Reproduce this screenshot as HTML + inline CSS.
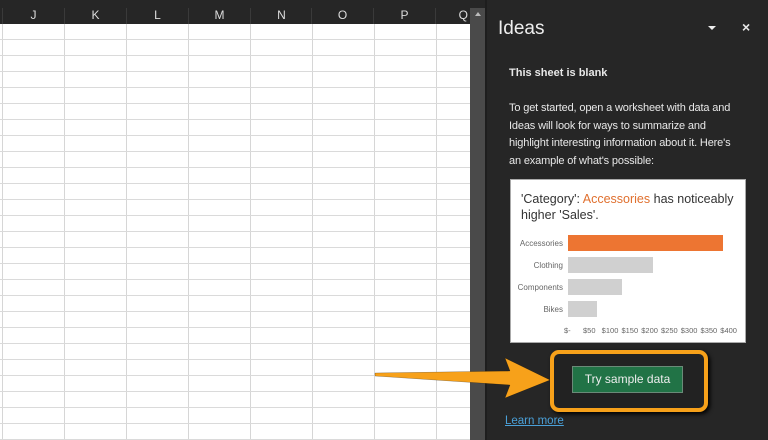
<!DOCTYPE html>
<html><head><style>
*{margin:0;padding:0;box-sizing:border-box}
body{width:768px;height:440px;overflow:hidden;background:#262626;font-family:"Liberation Sans",sans-serif;position:relative}
.grid{position:absolute;left:0;top:24px;width:470px;height:416px;background-color:#fff;
background-image:linear-gradient(#dadada 1px,transparent 1px),linear-gradient(90deg,#d6d6d6 1px,transparent 1px);
background-size:100% 16px,62px 100%;background-position:0 15px,2px 0}
.hdr{position:absolute;top:8px;height:16px;color:#ddd;font-size:12px;text-align:center;border-left:1px solid #3a3a3a}
.sb{position:absolute;left:470px;top:8px;width:15px;height:432px;background:#4a4a4a}
.sb2{position:absolute;left:485px;top:0;width:2px;height:440px;background:#1e1e1e}
.panel{position:absolute;left:487px;top:0;width:281px;height:440px;background:#262626;color:#eee}
.t{position:absolute;font-size:12px;line-height:17.5px;color:#e8e8e8}
.card{position:absolute;left:510px;top:179px;width:236px;height:164px;background:#fff;border:1px solid #aaa}
.lbl{position:absolute;font-size:8px;color:#666;text-align:right;width:52px}
.bar{position:absolute;left:57px;height:16px;background:#d0d0d0}
</style></head><body>
<div class="grid"></div>
<div class="hdr" style="left:2px;width:62px">J</div>
<div class="hdr" style="left:64px;width:62px">K</div>
<div class="hdr" style="left:126px;width:62px">L</div>
<div class="hdr" style="left:188px;width:62px">M</div>
<div class="hdr" style="left:250px;width:62px">N</div>
<div class="hdr" style="left:311px;width:62px">O</div>
<div class="hdr" style="left:373px;width:62px">P</div>
<div class="hdr" style="left:435px;width:35px;text-align:right;padding-right:2px">Q</div>
<div class="sb"><div style="margin:4px auto 0;width:0;height:0;border-left:3px solid transparent;border-right:3px solid transparent;border-bottom:4px solid #bbb"></div></div>
<div class="sb2"></div>
<div class="panel"></div>
<div class="t" style="left:498px;top:17px;font-size:19px;line-height:24px;color:#eee">Ideas</div>
<div style="position:absolute;left:708px;top:26px;border-left:4px solid transparent;border-right:4px solid transparent;border-top:4px solid #eee"></div>
<div class="t" style="left:742px;top:19px;font-size:14px;font-weight:bold">×</div>
<div class="t" style="left:509px;top:65px;font-weight:bold;font-size:11px">This sheet is blank</div>
<div class="t" style="left:509px;top:100px;width:236px;font-size:11px;letter-spacing:-0.15px">To get started, open a worksheet with data and Ideas will look for ways to summarize and highlight interesting information about it. Here's an example of what's possible:</div>
<div class="card">
<div style="position:absolute;left:10px;top:11px;font-size:12.5px;line-height:16px;color:#333;width:220px">'Category': <span style="color:#e0702f">Accessories</span> has noticeably higher 'Sales'.</div>
<div class="lbl" style="left:0;top:59px">Accessories</div>
<div class="lbl" style="left:0;top:81px">Clothing</div>
<div class="lbl" style="left:0;top:103px">Components</div>
<div class="lbl" style="left:0;top:125px">Bikes</div>
<div class="bar" style="top:55px;width:155px;background:#ed7532"></div>
<div class="bar" style="top:77px;width:85px"></div>
<div class="bar" style="top:99px;width:54px"></div>
<div class="bar" style="top:121px;width:29px"></div>
<div style="position:absolute;left:53px;top:146px;font-size:7.5px;color:#666;word-spacing:1px;white-space:nowrap">$- &nbsp; &nbsp;$50 &nbsp;$100 $150 $200 $250 $300 $350 $400</div>
</div>
<div style="position:absolute;left:550px;top:350px;width:158px;height:62px;border:4px solid #f7a11a;border-radius:9px;box-shadow:2px 2px 4px #000;background:#222"></div>
<div style="position:absolute;left:572px;top:366px;width:111px;height:27px;background:#217346;border:1px solid #6a8a78;color:#eee;font-size:12px;text-align:center;line-height:25px">Try sample data</div>
<svg style="position:absolute;left:370px;top:350px" width="190" height="50"><polygon points="5,23 140,21 135,8 180,30 135,48 140,35 5,26" fill="#f7a11a" stroke="#000" stroke-opacity="0.4" stroke-width="0.5"/></svg>
<div class="t" style="left:505px;top:413px;font-size:11.5px;color:#4aa0d8;text-decoration:underline">Learn more</div>
</body></html>
